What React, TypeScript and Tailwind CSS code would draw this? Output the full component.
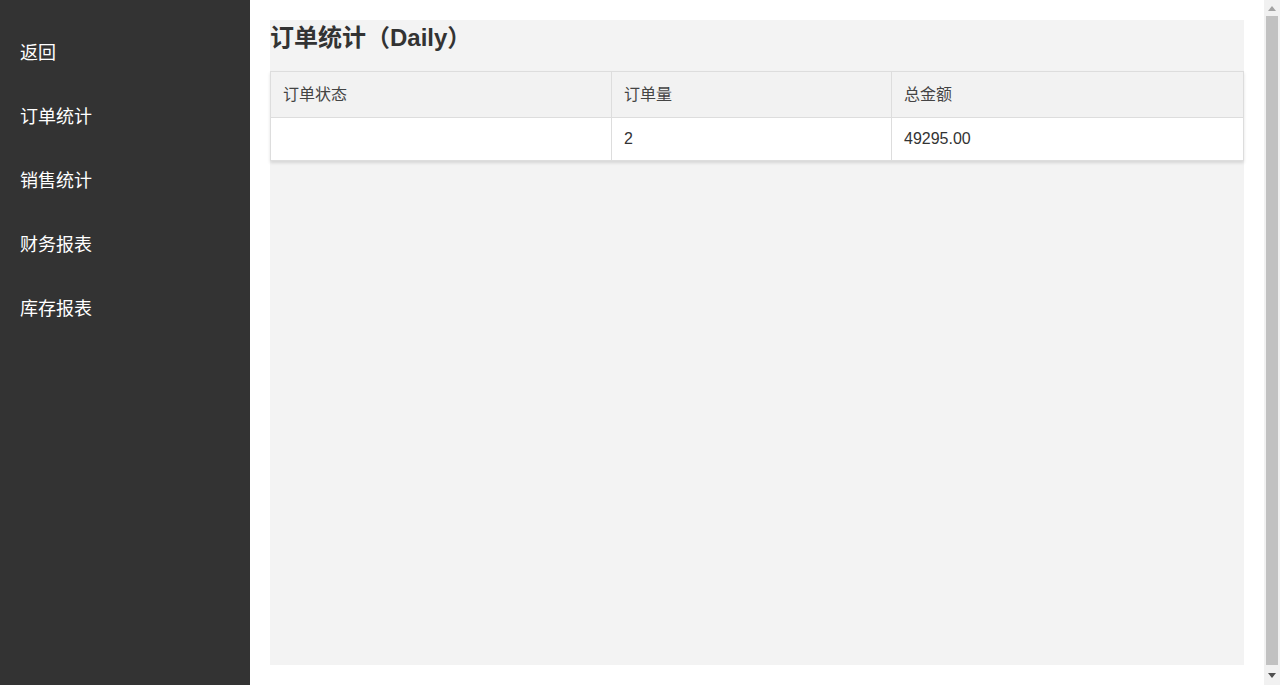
const NAV = ["返回", "订单统计", "销售统计", "财务报表", "库存报表"];

const ROWS = [{ status: "", count: "2", amount: "49295.00" }];

// Classic page scrollbar, drawn because the headless browser hides its own
function ScrollBar() {
  return (
    <div className="flex w-4 shrink-0 flex-col bg-[#f1f1f1]">
      <div className="flex h-4 items-center justify-center">
        <svg width="8" height="5" viewBox="0 0 8 5">
          <path d="M0 5 L4 0 L8 5 Z" fill="#a3a3a3" />
        </svg>
      </div>
      <div className="mx-[2px] flex-1 bg-[#c1c1c1]" />
      <div className="flex h-[20px] items-center justify-center">
        <svg width="8" height="5" viewBox="0 0 8 5">
          <path d="M0 0 L8 0 L4 5 Z" fill="#505050" />
        </svg>
      </div>
    </div>
  );
}

export default function App() {
  return (
    <div
      className="flex h-[685px] overflow-hidden bg-white text-[#333]"
      style={{ fontFamily: '"Liberation Sans", Arial, "Noto Sans CJK SC", sans-serif' }}
    >
      {/* Sidebar */}
      <aside className="w-[250px] shrink-0 bg-[#333333] pt-[21px]">
        {NAV.map((item) => (
          <div key={item} className="h-16 px-5 text-[18px] leading-[64px] text-white">
            {item}
          </div>
        ))}
      </aside>

      {/* Content */}
      <main className="flex-1 px-5 pt-5">
        <div className="h-[645px] bg-[#f3f3f3]">
          <h2 className="text-[24px] font-bold leading-[36px] text-[#333]">订单统计（Daily）</h2>
          <table className="mt-[15px] w-full border-collapse bg-white text-[16px] shadow-[0_2px_3px_rgba(0,0,0,0.12)]">
            <thead>
              <tr className="bg-[#f2f2f2]">
                <th className="h-[46px] w-[341px] border border-[#dddddd] px-3 text-left font-normal text-[#444]">
                  订单状态
                </th>
                <th className="h-[46px] w-[280px] border border-[#dddddd] px-3 text-left font-normal text-[#444]">
                  订单量
                </th>
                <th className="h-[46px] border border-[#dddddd] px-3 text-left font-normal text-[#444]">
                  总金额
                </th>
              </tr>
            </thead>
            <tbody>
              {ROWS.map((r, i) => (
                <tr key={i}>
                  <td className="h-[43px] border border-[#dddddd] px-3">{r.status}</td>
                  <td className="h-[43px] border border-[#dddddd] px-3">{r.count}</td>
                  <td className="h-[43px] border border-[#dddddd] px-3">{r.amount}</td>
                </tr>
              ))}
            </tbody>
          </table>
        </div>
      </main>

      <ScrollBar />
    </div>
  );
}
